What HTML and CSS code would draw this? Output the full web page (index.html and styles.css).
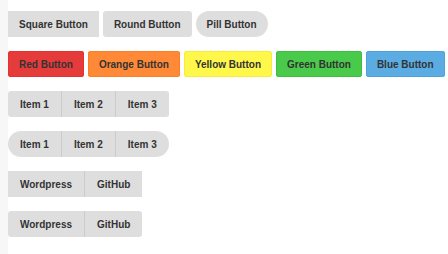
FILE: index.html
```html
<!DOCTYPE html>
<html lang="en">
<head>
  <meta charset="UTF-8" />
  <title>Buttons</title>
  <link rel="stylesheet" href="styles.css">
</head>
<body>

  <div class="page">
    <div class="row">
      <button class="btn">Square Button</button>
      <button class="btn round">Round Button</button>
      <button class="btn pill">Pill Button</button>
    </div>

    <div class="row">
      <button class="btn round red">Red Button</button>
      <button class="btn round orange">Orange Button</button>
      <button class="btn round yellow">Yellow Button</button>
      <button class="btn round green">Green Button</button>
      <button class="btn round blue">Blue Button</button>
    </div>

    <div class="row">
      <div class="group round">
        <button class="btn">Item 1</button>
        <button class="btn">Item 2</button>
        <button class="btn">Item 3</button>
      </div>
    </div>

    <div class="row">
      <div class="group pill">
        <button class="btn">Item 1</button>
        <button class="btn">Item 2</button>
        <button class="btn">Item 3</button>
      </div>
    </div>

    <div class="row">
      <div class="group">
        <button class="btn">Wordpress</button>
        <button class="btn">GitHub</button>
      </div>
    </div>

    <div class="row">
      <div class="group round">
        <button class="btn">Wordpress</button>
        <button class="btn">GitHub</button>
      </div>
    </div>
  </div>

</body>
</html>
```

FILE: styles.css
```css
html {
  background: #f7f7f7;
}
body {
  margin: 0 0 0 8px;
  min-height: 254px;
  background: #fff;
  font-family: 'Liberation Sans', Arial, sans-serif;
}
.page {
  padding-top: 11px;
}
.row {
  display: flex;
  gap: 4px;
  margin-bottom: 14px;
}
.btn {
  height: 26px;
  padding: 0 11px;
  border: none;
  background: #dedede;
  color: #333;
  font-family: inherit;
  font-size: 10px;
  font-weight: bold;
  cursor: pointer;
}
.round {
  border-radius: 3px;
}
.pill {
  border-radius: 13px;
}
.red { background: #e53b3b; box-shadow: inset 0 0 0 1px #e03333; }
.orange { background: #ff8936; box-shadow: inset 0 0 0 1px #f5812e; }
.yellow { background: #fff84a; box-shadow: inset 0 0 0 1px #f5ec3c; }
.green { background: #4aca4a; box-shadow: inset 0 0 0 1px #3fbf3f; }
.blue { background: #5aace2; box-shadow: inset 0 0 0 1px #4fa3da; }

.group {
  display: flex;
  overflow: hidden;
}
.group .btn {
  padding: 0 12px;
  border-radius: 0;
}
.group .btn + .btn {
  border-left: 1px solid #cbcbcb;
}
```
